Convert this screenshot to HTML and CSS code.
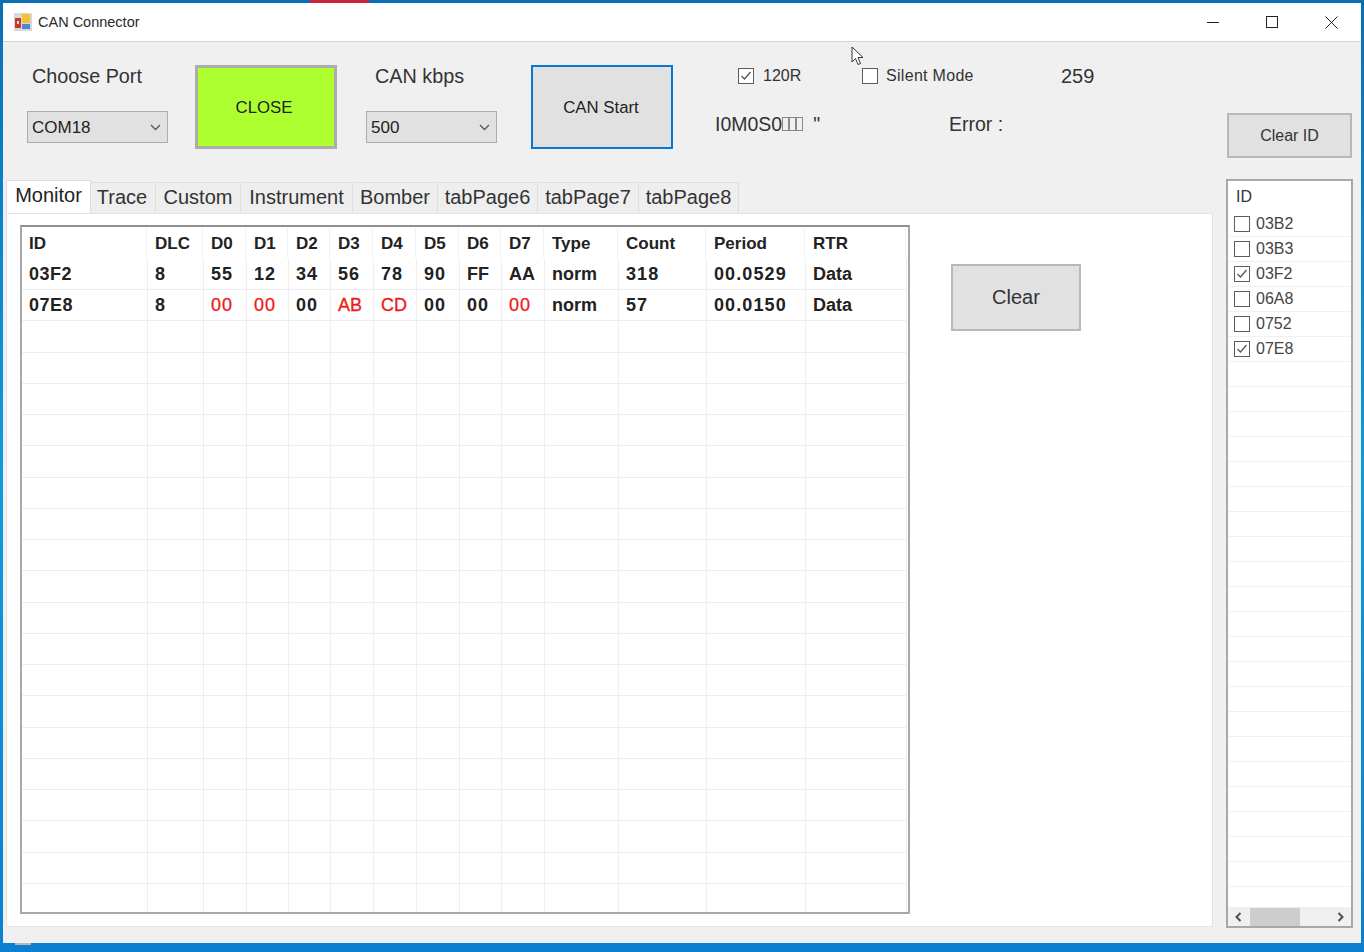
FILE: index.html
```html
<!DOCTYPE html>
<html lang="en">
<head>
<meta charset="utf-8">
<title>CAN Connector</title>
<link rel="stylesheet" href="styles.css">
</head>
<body>
<div class="desktop">
  <div class="window">
    <header class="titlebar">
      <svg class="appicon" width="18" height="18" viewBox="0 0 18 18"><rect width="18" height="18" fill="#d8d8d8"/><rect x="8" y="1" width="8" height="9" fill="#f2c230"/><rect x="1" y="5" width="6" height="10" fill="#c8382c"/><rect x="3" y="8" width="2" height="3" fill="#f4e0d0"/><rect x="8" y="11" width="8" height="5" fill="#4f86d8"/></svg>
      <span class="title">CAN Connector</span>
      <div class="winbtns">
        <svg width="12" height="12" viewBox="0 0 12 12"><path d="M0 6.500h13" stroke="#222" fill="none"/></svg>
        <svg width="12" height="12" viewBox="0 0 12 12"><rect x="0.500" y="0.500" width="11" height="11" stroke="#222" fill="none"/></svg>
        <svg width="13" height="13" viewBox="0 0 13 13"><path d="M.5.5l12 12M12.500.5l-12 12" stroke="#222" fill="none"/></svg>
      </div>
    </header>
    <main class="form">
      <section class="controls">
        <div class="field port">
          <div class="lbl">Choose Port</div>
          <div class="select s-port"><span>COM18</span><svg width="11" height="7" viewBox="0 0 11 7"><path d="M1 1l4.500 4.500L10 1" stroke="#555" stroke-width="1.300" fill="none"/></svg></div>
        </div>
        <button class="btn close">CLOSE</button>
        <div class="field kbps">
          <div class="lbl">CAN kbps</div>
          <div class="select s-kbps"><span>500</span><svg width="11" height="7" viewBox="0 0 11 7"><path d="M1 1l4.500 4.500L10 1" stroke="#555" stroke-width="1.300" fill="none"/></svg></div>
        </div>
        <button class="btn start">CAN Start</button>
        <div class="status">
          <div class="opts">
            <label class="chk c120"><span class="box"><svg width="12" height="10" viewBox="0 0 12 10"><path d="M1.500 5l3 3 6-7" stroke="#555" stroke-width="1.300" fill="none"/></svg></span>120R</label>
            <label class="chk silent"><span class="box"></span>Silent Mode</label>
            <span class="count">259</span>
          </div>
          <div class="msgs">
            <span class="code">I0M0S0<i class="tofu"></i><i class="tofu"></i><i class="tofu"></i><span class="quote">"</span></span>
            <span class="err">Error :</span>
          </div>
        </div>
        <button class="btn clearid">Clear ID</button>
      </section>
      <section class="lower">
        <div class="tabarea">
          <nav class="tabs">
            <div class="tab active">Monitor</div>
            <div class="tab t2">Trace</div>
            <div class="tab t3">Custom</div>
            <div class="tab t4">Instrument</div>
            <div class="tab t5">Bomber</div>
            <div class="tab t6">tabPage6</div>
            <div class="tab t7">tabPage7</div>
            <div class="tab t8">tabPage8</div>
          </nav>
          <div class="panel">
            <div class="grid">
              <div class="row head"><b>ID</b><b>DLC</b><b>D0</b><b>D1</b><b>D2</b><b>D3</b><b>D4</b><b>D5</b><b>D6</b><b>D7</b><b>Type</b><b>Count</b><b>Period</b><b>RTR</b></div>
              <div class="row"><b class="i">03F2</b><b>8</b><b class="n">55</b><b class="n">12</b><b class="n">34</b><b class="n">56</b><b class="n">78</b><b class="n">90</b><b>FF</b><b>AA</b><b>norm</b><b class="n">318</b><b class="n">00.0529</b><b>Data</b></div>
              <div class="row"><b class="i">07E8</b><b>8</b><b class="n red">00</b><b class="n red">00</b><b class="n">00</b><b class="red">AB</b><b class="red">CD</b><b class="n">00</b><b class="n">00</b><b class="n red">00</b><b>norm</b><b class="n">57</b><b class="n">00.0150</b><b>Data</b></div>
              <div class="row"><i></i><i></i><i></i><i></i><i></i><i></i><i></i><i></i><i></i><i></i><i></i><i></i><i></i><i></i></div>
              <div class="row"><i></i><i></i><i></i><i></i><i></i><i></i><i></i><i></i><i></i><i></i><i></i><i></i><i></i><i></i></div>
              <div class="row"><i></i><i></i><i></i><i></i><i></i><i></i><i></i><i></i><i></i><i></i><i></i><i></i><i></i><i></i></div>
              <div class="row"><i></i><i></i><i></i><i></i><i></i><i></i><i></i><i></i><i></i><i></i><i></i><i></i><i></i><i></i></div>
              <div class="row"><i></i><i></i><i></i><i></i><i></i><i></i><i></i><i></i><i></i><i></i><i></i><i></i><i></i><i></i></div>
              <div class="row"><i></i><i></i><i></i><i></i><i></i><i></i><i></i><i></i><i></i><i></i><i></i><i></i><i></i><i></i></div>
              <div class="row"><i></i><i></i><i></i><i></i><i></i><i></i><i></i><i></i><i></i><i></i><i></i><i></i><i></i><i></i></div>
              <div class="row"><i></i><i></i><i></i><i></i><i></i><i></i><i></i><i></i><i></i><i></i><i></i><i></i><i></i><i></i></div>
              <div class="row"><i></i><i></i><i></i><i></i><i></i><i></i><i></i><i></i><i></i><i></i><i></i><i></i><i></i><i></i></div>
              <div class="row"><i></i><i></i><i></i><i></i><i></i><i></i><i></i><i></i><i></i><i></i><i></i><i></i><i></i><i></i></div>
              <div class="row"><i></i><i></i><i></i><i></i><i></i><i></i><i></i><i></i><i></i><i></i><i></i><i></i><i></i><i></i></div>
              <div class="row"><i></i><i></i><i></i><i></i><i></i><i></i><i></i><i></i><i></i><i></i><i></i><i></i><i></i><i></i></div>
              <div class="row"><i></i><i></i><i></i><i></i><i></i><i></i><i></i><i></i><i></i><i></i><i></i><i></i><i></i><i></i></div>
              <div class="row"><i></i><i></i><i></i><i></i><i></i><i></i><i></i><i></i><i></i><i></i><i></i><i></i><i></i><i></i></div>
              <div class="row"><i></i><i></i><i></i><i></i><i></i><i></i><i></i><i></i><i></i><i></i><i></i><i></i><i></i><i></i></div>
              <div class="row"><i></i><i></i><i></i><i></i><i></i><i></i><i></i><i></i><i></i><i></i><i></i><i></i><i></i><i></i></div>
              <div class="row"><i></i><i></i><i></i><i></i><i></i><i></i><i></i><i></i><i></i><i></i><i></i><i></i><i></i><i></i></div>
              <div class="row"><i></i><i></i><i></i><i></i><i></i><i></i><i></i><i></i><i></i><i></i><i></i><i></i><i></i><i></i></div>
              <div class="row"><i></i><i></i><i></i><i></i><i></i><i></i><i></i><i></i><i></i><i></i><i></i><i></i><i></i><i></i></div>
            </div>
            <button class="btn clear">Clear</button>
          </div>
        </div>
        <aside class="idlist">
          <div class="idhead">ID</div>
          <div class="idrow"><span class="box"></span>03B2</div>
          <div class="idrow"><span class="box"></span>03B3</div>
          <div class="idrow"><span class="box"><svg width="12" height="10" viewBox="0 0 12 10"><path d="M1.500 5l3 3 6-7" stroke="#555" stroke-width="1.300" fill="none"/></svg></span>03F2</div>
          <div class="idrow"><span class="box"></span>06A8</div>
          <div class="idrow"><span class="box"></span>0752</div>
          <div class="idrow"><span class="box"><svg width="12" height="10" viewBox="0 0 12 10"><path d="M1.500 5l3 3 6-7" stroke="#555" stroke-width="1.300" fill="none"/></svg></span>07E8</div>
          <div class="idrow"></div><div class="idrow"></div><div class="idrow"></div><div class="idrow"></div>
          <div class="idrow"></div><div class="idrow"></div><div class="idrow"></div><div class="idrow"></div>
          <div class="idrow"></div><div class="idrow"></div><div class="idrow"></div><div class="idrow"></div>
          <div class="idrow"></div><div class="idrow"></div><div class="idrow"></div><div class="idrow"></div>
          <div class="idrow"></div><div class="idrow"></div><div class="idrow"></div><div class="idrow"></div>
          <div class="idrow"></div>
          <div class="idfill"></div>
          <div class="hscroll">
            <svg class="arr" width="9" height="10" viewBox="0 0 9 10"><path d="M6.500 1L2.500 5l4 4" stroke="#505050" stroke-width="2" fill="none"/></svg>
            <div class="thumb"></div>
            <svg class="arr" width="9" height="10" viewBox="0 0 9 10"><path d="M2.500 1l4 4-4 4" stroke="#505050" stroke-width="2" fill="none"/></svg>
          </div>
        </aside>
      </section>
    </main>
  </div>
  <svg class="cursor" width="13" height="20" viewBox="0 0 13 20"><path d="M1 1v15l3.500-3.500 2.500 6 2.500-1-2.500-6h5z" fill="#fff" stroke="#333" stroke-width="1"/></svg>
</div>
</body>
</html>
```
FILE: styles.css
```css
* { box-sizing: border-box; }
html, body { margin: 0; height: 100%; }
body { font-family: "Liberation Sans", Arial, sans-serif; color: #222; overflow: hidden; }
.desktop {
  position: relative; width: 1364px; height: 952px; padding: 3px 3px 9px 3px;
  background:
    linear-gradient(#c8243c, #c8243c) 310px 0 / 59px 3px no-repeat,
    linear-gradient(#b4b8bc, #b4b8bc) 15px 943px / 16px 2px no-repeat,
    linear-gradient(#0a6fb5, #0f9ae2 50%, #0c7fd0);
}
.cursor { position: absolute; left: 851px; top: 46px; }
.window { width: 1358px; height: 940px; background: #f0f0f0; display: flex; flex-direction: column; }
.titlebar { height: 39px; flex: none; background: #fff; border-bottom: 1px solid #d4d4d4; display: flex; align-items: center; padding: 0 23px 0 11px; }
.appicon { margin-right: 6px; }
.title { font-size: 14.5px; color: #2a2a2a; }
.winbtns { margin-left: auto; display: flex; align-items: center; gap: 47px; }
.form { flex: 1; display: flex; flex-direction: column; padding: 0 3px; }
.controls { height: 138px; flex: none; display: flex; align-items: flex-start; }
.lbl { font-size: 19.8px; line-height: 24px; color: #333; }
.field { display: flex; flex-direction: column; flex: none; }
.port { margin: 22px 0 0 21px; width: 168px; }
.port .lbl { padding-left: 5px; }
.kbps { margin: 22px 0 0 29px; width: 165px; }
.kbps .lbl { padding-left: 9px; }
.select { height: 32px; margin-top: 23px; background: #e1e1e1; border: 1px solid #adadad; display: flex; align-items: center; justify-content: space-between; padding: 1px 6px 0 4px; font-size: 17px; color: #222; }
.s-port { width: 141px; }
.s-kbps { width: 131px; }
.btn { font-family: inherit; color: #222; background: #e1e1e1; border: 2px solid #b8b8b8; padding: 0; flex: none; }
.close { width: 142px; height: 84px; margin-top: 23px; padding: 2px 4px 0 0; background: #adff2f; border: 3px solid #adadad; font-size: 16.800px; }
.start { width: 142px; height: 84px; margin-top: 23px; padding: 2px 2px 0 0; border: 2px solid #0a78d0; font-size: 16.800px; }
.status { width: 554px; flex: none; }
.opts { display: flex; align-items: center; height: 22px; margin: 23px 0 0 65px; }
.chk { display: flex; align-items: center; font-size: 16px; color: #333; }
.box { width: 16px; height: 16px; flex: none; background: #fff; border: 1px solid #5c5c5c; display: inline-flex; align-items: center; justify-content: center; }
.c120 { width: 124px; }
.c120 .box { margin-right: 9px; }
.silent { width: 199px; letter-spacing: 0.3px; }
.silent .box { margin-right: 8px; }
.count { font-size: 20px; color: #333; }
.msgs { display: flex; margin: 25px 0 0 42px; font-size: 19.5px; line-height: 24px; color: #333; }
.code { width: 234px; display: flex; align-items: center; }
.tofu { width: 7px; height: 14px; border: 1px solid #888; flex: none; }
.quote { margin-left: 10px; }
.err { width: 80px; }
.clearid { width: 125px; height: 45px; margin-top: 71px; font-size: 16px; color: #333; }
.lower { flex: 1; display: flex; align-items: flex-start; }
.tabarea { width: 1207px; height: 747px; flex: none; display: flex; flex-direction: column; }
.tabs { display: flex; height: 33px; flex: none; align-items: flex-end; }
.tab { height: 31px; border: 1px solid #dedede; border-bottom: none; border-left: none; font-size: 20px; line-height: 28px; text-align: center; color: #333; background: #eeeeee; flex: none; }
.active { height: 33px; width: 85px; background: #fff; line-height: 28px; border-left: 1px solid #dedede; color: #222; }
.t2 { width: 65px; padding-right: 2px; }
.t3 { width: 85px; }
.t4 { width: 112px; }
.t5 { width: 85px; }
.t6 { width: 100px; }
.t7 { width: 101px; }
.t8 { width: 100px; }
.panel { flex: 1; background: #fff; border: 1px solid #e4e4e4; padding: 11px 0 0 13px; display: flex; align-items: flex-start; }
.grid { width: 890px; height: 689px; border: 2px solid #a8a8a8; border-top-color: #909090; padding-top: 1px; overflow: hidden; flex: none; background: #fff; }
.row { display: grid; grid-template-columns: 126px 56px 43px 42px 42px 43px 43px 43px 42px 43px 74px 88px 99px 101px; height: 31.25px; border-bottom: 1px solid #eeeeee; width: 885px; }
.head { border-bottom-color: transparent; height: 30.9px; }
.row b, .row i { display: block; font-weight: bold; font-style: normal; font-size: 18px; line-height: 31px; padding-left: 7px; color: #222; border-right: 1px solid #eeeeee; white-space: nowrap; }
.head b { font-size: 17px; line-height: 32px; height: 30px; margin-right: 1px; border-right-color: #f2f2f2; }
.row b.n { letter-spacing: 1.1px; }
.row b.i { letter-spacing: 0.5px; }
.row b.red { color: #f01818; font-weight: normal; -webkit-text-stroke: 0.3px #f01818; }
.clear { width: 130px; height: 67px; margin: 39px 0 0 41px; font-size: 20px; color: #333; }
.idlist { width: 127px; flex: none; margin: -1px 0 0 13px; height: 749px; background: #fff; border: 2px solid #a8a8a8; display: flex; flex-direction: column; overflow: hidden; }
.idhead { height: 31px; font-size: 16px; line-height: 32px; padding-left: 8px; color: #333; flex: none; }
.idrow { height: 25px; flex: none; display: flex; align-items: center; border-bottom: 1px solid #f0f0f0; padding-left: 6px; font-size: 16px; color: #444; }
.idrow .box { margin-right: 6px; }
.idfill { flex: 1; }
.hscroll { height: 19px; flex: none; background: #f0f0f0; display: flex; align-items: center; }
.arr { flex: none; margin-left: 6px; }
.arr:last-child { margin: 0 6px 0 auto; }
.thumb { width: 50px; height: 18px; background: #cdcdcd; margin-left: 7px; }
```
